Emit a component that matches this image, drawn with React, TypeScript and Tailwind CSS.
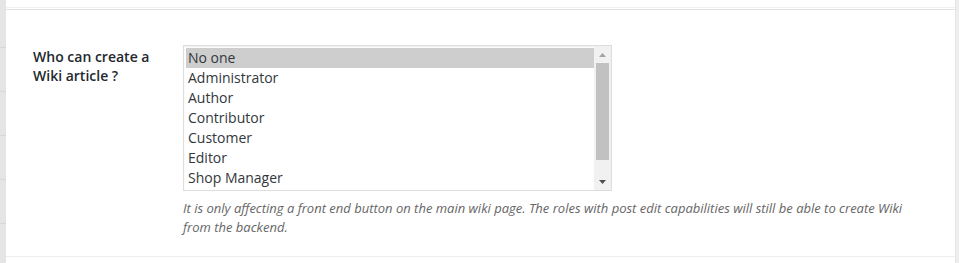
const ROLES = [
  "No one",
  "Administrator",
  "Author",
  "Contributor",
  "Customer",
  "Editor",
  "Shop Manager",
];

function RoleList({ selected }: { selected: string }) {
  return (
    <div className="w-[429px] h-[146px] border border-[#dddddd] bg-white flex p-[2px] shadow-[inset_0_1px_2px_rgba(0,0,0,0.07)]">
      <div className="flex-1 flex flex-col">
        {ROLES.map((role) => (
          <div
            key={role}
            className={`h-[20px] leading-[20px] px-[2px] text-[14px] text-[#32373c] ${
              role === selected ? "bg-[#cecece]" : ""
            }`}
          >
            {role}
          </div>
        ))}
      </div>
      {/* scrollbar */}
      <div className="w-[17px] -my-[2px] -mr-[2px] bg-[#f1f1f1] flex flex-col items-center">
        <div className="h-[17px] flex items-center justify-center">
          <svg width="7" height="4" viewBox="0 0 7 4">
            <path d="M0 4 L3.5 0 L7 4 Z" fill="#a3a3a3" />
          </svg>
        </div>
        <div className="w-[13px] h-[97px] bg-[#c1c1c1]" />
        <div className="flex-1" />
        <div className="h-[17px] flex items-center justify-center">
          <svg width="7" height="4" viewBox="0 0 7 4">
            <path d="M0 0 L7 0 L3.5 4 Z" fill="#505050" />
          </svg>
        </div>
      </div>
    </div>
  );
}

export default function App() {
  return (
    <div
      className="w-[959px] h-[263px] flex bg-white overflow-hidden"
      style={{ fontFamily: '"Open Sans", "Liberation Sans", sans-serif' }}
    >
      {/* left admin strip */}
      <div className="w-[6px] bg-[#e5e5e5] flex flex-col">
        <div className="h-[48px] border-b border-[#d6d6d6]" />
        <div className="h-[44px] border-b border-[#d6d6d6]" />
        <div className="h-[44px] border-b border-[#d6d6d6]" />
        <div className="h-[44px] border-b border-[#d6d6d6]" />
        <div className="h-[44px] border-b border-[#d6d6d6]" />
      </div>

      <div className="flex-1 flex flex-col">
        <div className="h-[8px] border-b border-[#f0f0f0]" />
        <div className="h-[2px] border-b border-[#e2e2e2]" />

        <div className="h-[247px] border-b border-[#eeeeee] flex pl-[27px] pt-[35px]">
          <div className="w-[150px] pt-[2px] text-[14px] leading-[19px] font-semibold text-[#23282d]">
            Who can create a
            <br />
            Wiki article ?
          </div>
          <div className="flex flex-col">
            <RoleList selected="No one" />
            <p className="mt-[8px] w-[735px] text-[13px] leading-[19px] italic text-[#666666]">
              It is only affecting a front end button on the main wiki page. The roles with
              post edit capabilities will still be able to create Wiki from the backend.
            </p>
          </div>
        </div>
        <div className="flex-1" />
      </div>

      {/* right edge */}
      <div className="w-[4px] bg-[#eeeeee] border-l border-[#e6e6e6]" />
    </div>
  );
}
